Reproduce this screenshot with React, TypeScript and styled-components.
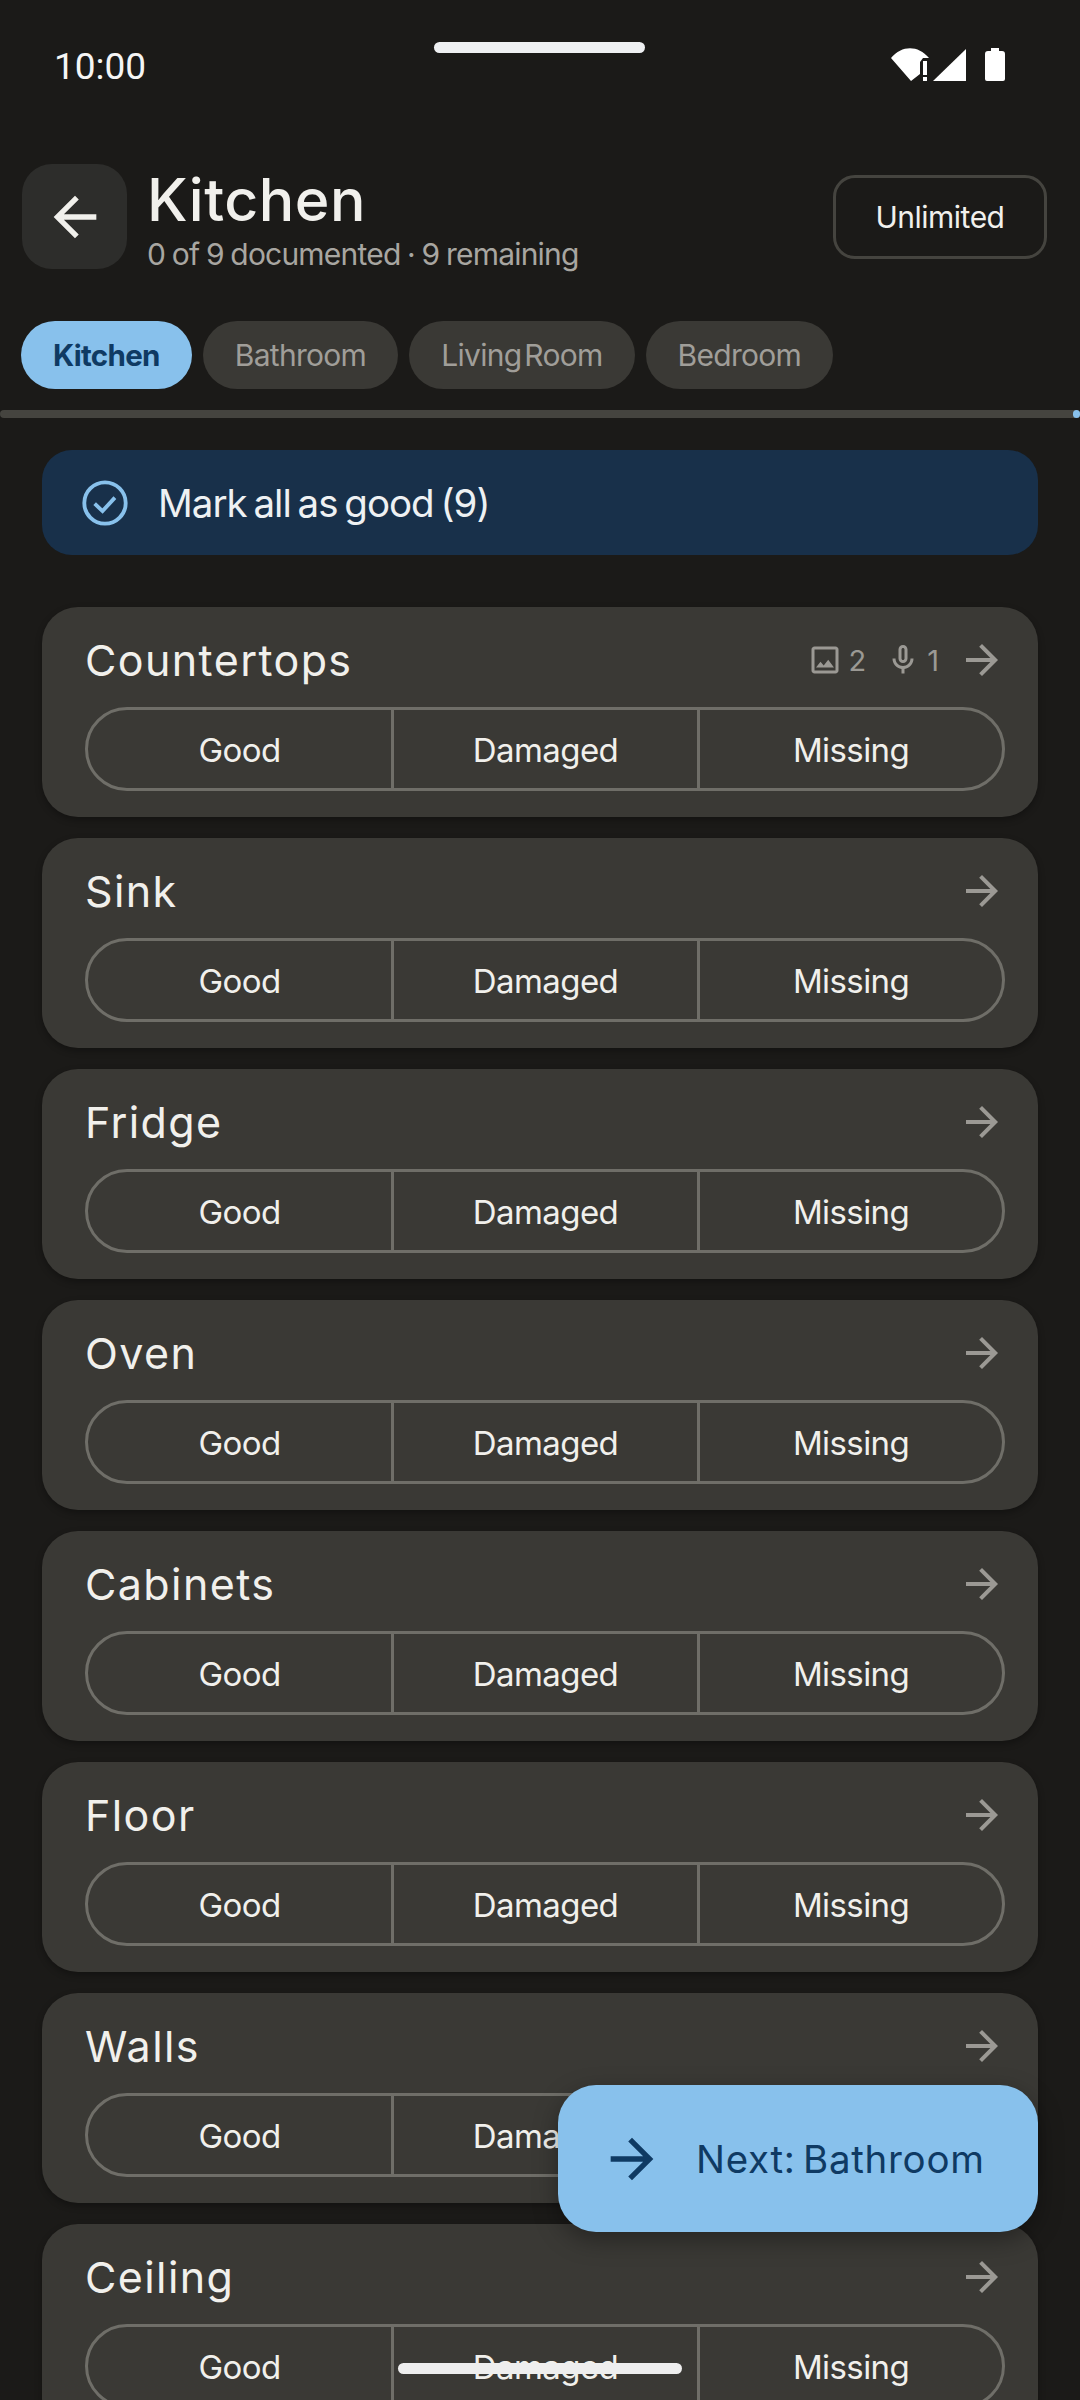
import React from "react";
import styled, { createGlobalStyle } from "styled-components";

const GlobalStyle = createGlobalStyle`
  html, body {
    margin: 0;
    padding: 0;
    background: #1b1a18;
  }
  * {
    box-sizing: border-box;
  }
`;

const Screen = styled("div")`
  position: relative;
  width: 1080px;
  height: 2400px;
  overflow: hidden;
  background: #1b1a18;
  font-family: "Inter", "Liberation Sans", sans-serif;
  color: #f1f0ec;
`;

const StatusBar = styled("div")`
  display: flex;
  align-items: center;
  justify-content: space-between;
  height: 130px;
  padding: 0 75px 0 54px;
`;

const Time = styled("span")`
  margin-top: 2px;
  font-family: "Roboto", sans-serif;
  font-size: 37px;
  color: #f5f5f5;
`;

const StatusIcons = styled("svg")`
  display: block;
`;

const CameraPill = styled("div")`
  position: absolute;
  left: 434px;
  top: 42px;
  width: 211px;
  height: 11px;
  border-radius: 6px;
  background: #eff0f2;
`;

const Header = styled("div")`
  display: flex;
  align-items: center;
  height: 105px;
  margin-top: 34px;
  padding: 0 33px 0 22px;
`;

const BackButton = styled("div")`
  display: flex;
  align-items: center;
  justify-content: center;
  width: 105px;
  height: 105px;
  border-radius: 30px;
  background: #2d2d2b;
  color: #f1f0ec;
`;

const Heading = styled("div")`
  flex: 1;
  align-self: flex-start;
  margin-left: 20px;
  padding-top: 4px;
`;

const Title = styled("div")`
  font-size: 59px;
  font-weight: 500;
  line-height: 64px;
  letter-spacing: 0.5px;
`;

const Subtitle = styled("div")`
  margin-top: 3px;
  font-size: 30px;
  line-height: 38px;
  color: #a8a6a1;
  letter-spacing: -0.8px;
  word-spacing: -1px;
`;

const PlanBadge = styled("div")`
  display: flex;
  align-items: center;
  justify-content: center;
  width: 214px;
  height: 84px;
  border: 3px solid #45443f;
  border-radius: 22px;
  font-size: 30px;
  letter-spacing: -0.5px;
`;

const TabRow = styled("div")`
  display: flex;
  gap: 11px;
  margin-top: 52px;
  padding-left: 21px;
`;

const Tab = styled("div")<{ $active?: boolean }>`
  display: flex;
  align-items: center;
  justify-content: center;
  height: 68px;
  padding: 0 32px;
  border-radius: 34px;
  font-size: ${(p) => (p.$active ? "29.5px" : "30px")};
  letter-spacing: -0.7px;
  word-spacing: -5px;
  font-weight: ${(p) => (p.$active ? 700 : 400)};
  color: ${(p) => (p.$active ? "#0f3a63" : "#a09e99")};
  background: ${(p) => (p.$active ? "#88c1ec" : "#3a3935")};
`;

const ProgressTrack = styled("div")`
  position: relative;
  height: 8px;
  margin-top: 21px;
  border-radius: 4px;
  background: #45443f;
`;

const ProgressDot = styled("div")`
  position: absolute;
  right: 0;
  top: 0;
  width: 7px;
  height: 8px;
  border-radius: 4px;
  background: #88c1ec;
`;

const MarkAll = styled("div")`
  display: flex;
  align-items: center;
  gap: 26px;
  height: 105px;
  margin: 32px 42px 0;
  padding-left: 36px;
  border-radius: 30px;
  background: #18304a;
  font-size: 38.5px;
  letter-spacing: -1px;
  word-spacing: -3px;
  color: #eef1f3;
`;

const CheckIcon = styled("svg")`
  display: block;
  color: #88c1ec;
`;

const CardList = styled("div")`
  display: flex;
  flex-direction: column;
  gap: 21px;
  margin: 52px 42px 0;
`;

const Card = styled("div")`
  flex: none;
  height: 210px;
  padding: 0 33px 0 43px;
  border-radius: 36px;
  background: #3a3935;
  box-shadow: 0 3px 7px rgba(0, 0, 0, 0.3);
`;

const CardTop = styled("div")`
  display: flex;
  align-items: center;
  justify-content: space-between;
  height: 100px;
  padding-top: 6px;
  margin-right: -1px;
`;

const CardTitle = styled("div")`
  font-size: 43px;
  letter-spacing: 1.4px;
  color: #f1f0ec;
`;

const Meta = styled("div")`
  display: flex;
  align-items: center;
  color: #9b9994;
  font-size: 29px;
`;

const MetaCount = styled("span")`
  margin: 0 19px 0 6px;
`;

const Segments = styled("div")`
  display: grid;
  grid-template-columns: 303px 306px 1fr;
  height: 84px;
  border: 3px solid #6f6e68;
  border-radius: 42px;
`;

const Segment = styled("div")`
  display: flex;
  align-items: center;
  justify-content: center;
  padding-top: 1px;
  font-size: 33px;
  letter-spacing: -0.6px;
  color: #f1f0ec;
  & + & {
    border-left: 3px solid #6f6e68;
  }
`;

const NextButton = styled("div")`
  position: absolute;
  left: 558px;
  top: 2085px;
  display: flex;
  align-items: center;
  gap: 32px;
  width: 480px;
  height: 147px;
  padding-left: 42px;
  border-radius: 38px;
  background: #88c1ec;
  color: #0f3a63;
  font-size: 38.5px;
  letter-spacing: 0.7px;
  word-spacing: -4px;
  box-shadow: 0 8px 24px rgba(0, 0, 0, 0.35);
`;

const HomeBar = styled("div")`
  position: absolute;
  left: 398px;
  top: 2363px;
  width: 284px;
  height: 11px;
  border-radius: 6px;
  background: #eeeeee;
`;

const ARROW_RIGHT = "M12 4l-1.41 1.41L16.17 11H4v2h12.17l-5.58 5.59L12 20l8-8z";
const ARROW_LEFT = "M20 11H7.83l5.59-5.59L12 4l-8 8 8 8 1.41-1.41L7.83 13H20v-2z";

function MaterialIcon({ d, size }: { d: string; size: number }) {
  return (
    <svg width={size} height={size} viewBox="0 0 24 24" fill="currentColor" style={{ display: "block" }}>
      <path d={d} />
    </svg>
  );
}

const IMAGE_ICON =
  "M19 5v14H5V5h14m0-2H5c-1.1 0-2 .9-2 2v14c0 1.1.9 2 2 2h14c1.1 0 2-.9 2-2V5c0-1.1-.9-2-2-2zm-4.86 8.86l-3 3.87L9 13.14 6 17h12l-3.86-5.14z";
const MIC_ICON =
  "M12 14c1.66 0 3-1.34 3-3V5c0-1.66-1.34-3-3-3S9 3.34 9 5v6c0 1.66 1.34 3 3 3zm-1-9c0-.55.45-1 1-1s1 .45 1 1v6c0 .55-.45 1-1 1s-1-.45-1-1V5zm6 6c0 2.76-2.24 5-5 5s-5-2.24-5-5H5c0 3.53 2.61 6.43 6 6.92V21h2v-3.08c3.39-.49 6-3.39 6-6.92h-2z";

const rooms = ["Kitchen", "Bathroom", "Living Room", "Bedroom"];
const items = ["Countertops", "Sink", "Fridge", "Oven", "Cabinets", "Floor", "Walls", "Ceiling"];
const conditions = ["Good", "Damaged", "Missing"];

export default function App() {
  return (
    <Screen>
      <GlobalStyle />
      <StatusBar>
        <Time>10:00</Time>
        <StatusIcons width="114" height="34" viewBox="0 0 114 34" fill="#ffffff">
          {/* wifi wedge with the "!" cut out, then signal and battery */}
          <path d="M0 10 C11 -3 27 -3 38 10 L32 10 L29 14 L29 26 L20 33 Z" />
          <rect x="32" y="13" width="4" height="14" />
          <rect x="32" y="29" width="4" height="4" />
          <path d="M42 33 L75 1 L75 33 Z" />
          <path d="M100 0 h8 v3 h3 q3 0 3 3 v25 q0 2 -2 2 h-16 q-2 0 -2 -2 v-25 q0 -3 3 -3 h3 z" />
        </StatusIcons>
      </StatusBar>
      <CameraPill />
      <Header>
        <BackButton>
          <MaterialIcon d={ARROW_LEFT} size={64} />
        </BackButton>
        <Heading>
          <Title>Kitchen</Title>
          <Subtitle>0 of 9 documented · 9 remaining</Subtitle>
        </Heading>
        <PlanBadge>Unlimited</PlanBadge>
      </Header>
      <TabRow>
        {rooms.map((room, i) => (
          <Tab key={room} $active={i === 0}>
            {room}
          </Tab>
        ))}
      </TabRow>
      <ProgressTrack>
        <ProgressDot />
      </ProgressTrack>
      <MarkAll>
        <CheckIcon width="54" height="54" viewBox="0 0 24 24" fill="none" stroke="currentColor">
          <circle cx="12" cy="12" r="9.2" strokeWidth="1.7" />
          <path d="M7.4 12.3L10.9 15.6L16.4 9.6" strokeWidth="1.7" />
        </CheckIcon>
        Mark all as good (9)
      </MarkAll>
      <CardList>
        {items.map((item, i) => (
          <Card key={item}>
            <CardTop>
              <CardTitle>{item}</CardTitle>
              <Meta>
                {i === 0 && (
                  <>
                    <MaterialIcon d={IMAGE_ICON} size={36} />
                    <MetaCount>2</MetaCount>
                    <MaterialIcon d={MIC_ICON} size={36} />
                    <MetaCount>1</MetaCount>
                  </>
                )}
                <MaterialIcon d={ARROW_RIGHT} size={48} />
              </Meta>
            </CardTop>
            <Segments>
              {conditions.map((c) => (
                <Segment key={c}>{c}</Segment>
              ))}
            </Segments>
          </Card>
        ))}
      </CardList>
      <NextButton>
        <MaterialIcon d={ARROW_RIGHT} size={64} />
        Next: Bathroom
      </NextButton>
      <HomeBar />
    </Screen>
  );
}
